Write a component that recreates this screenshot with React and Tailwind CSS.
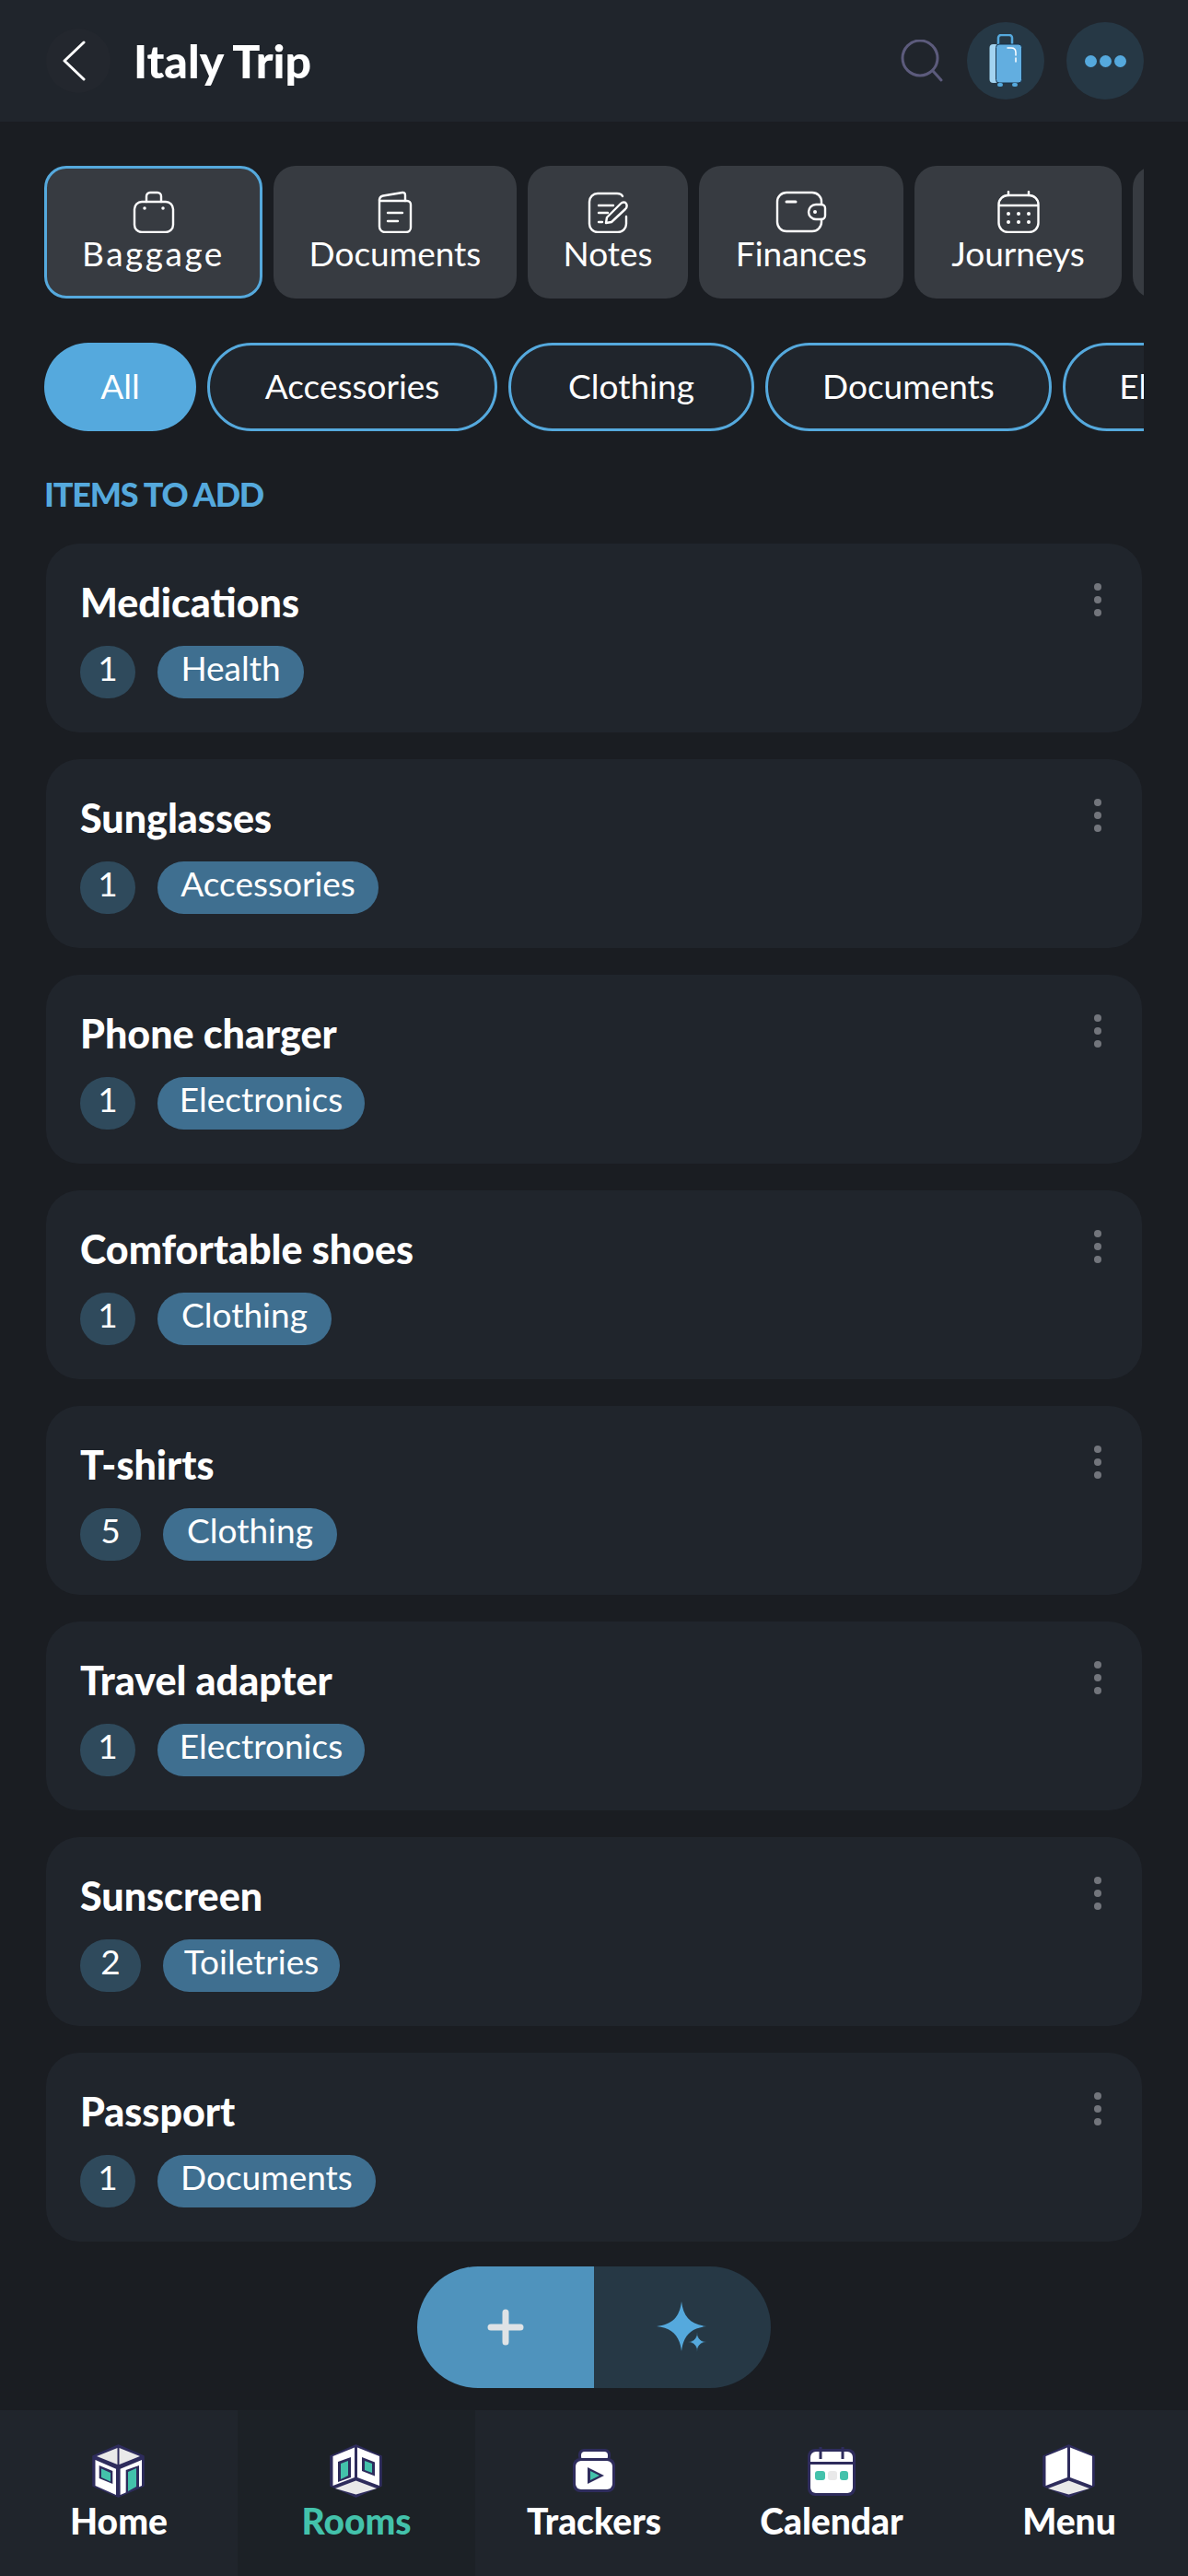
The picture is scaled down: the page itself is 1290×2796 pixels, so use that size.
const font = { fontFamily: 'Lato, sans-serif' }

const tabs = [
  { label: 'Baggage', width: 'w-[237px]', active: true, icon: BagIcon, spacing: 'tracking-[2.5px]' },
  { label: 'Documents', width: 'w-[264px]', icon: DocIcon },
  { label: 'Notes', width: 'w-[174px]', icon: NoteIcon },
  { label: 'Finances', width: 'w-[222px]', icon: WalletIcon },
  { label: 'Journeys', width: 'w-[225px]', icon: CalIcon },
  { label: '', width: 'w-[100px]' },
]

const filters = [
  { label: 'All', width: 'w-[165px]', active: true },
  { label: 'Accessories', width: 'w-[315px]' },
  { label: 'Clothing', width: 'w-[267px]' },
  { label: 'Documents', width: 'w-[311px]' },
  { label: 'Electronics', width: 'w-[300px]' },
]

const items = [
  { name: 'Medications', qty: 1, tag: 'Health', tagWidth: 'w-[159px]' },
  { name: 'Sunglasses', qty: 1, tag: 'Accessories', tagWidth: 'w-[240px]' },
  { name: 'Phone charger', qty: 1, tag: 'Electronics', tagWidth: 'w-[225px]' },
  { name: 'Comfortable shoes', qty: 1, tag: 'Clothing', tagWidth: 'w-[189px]' },
  { name: 'T-shirts', qty: 5, tag: 'Clothing', tagWidth: 'w-[189px]' },
  { name: 'Travel adapter', qty: 1, tag: 'Electronics', tagWidth: 'w-[225px]' },
  { name: 'Sunscreen', qty: 2, tag: 'Toiletries', tagWidth: 'w-[192px]' },
  { name: 'Passport', qty: 1, tag: 'Documents', tagWidth: 'w-[237px]' },
]

function BagIcon() {
  return (
    <svg width="46" height="46" viewBox="0 0 46 46" fill="none" stroke="white" strokeWidth="2.4" strokeLinecap="round" strokeLinejoin="round">
      <rect x="2" y="12" width="42" height="33" rx="8" />
      <path d="M15 12V6a4 4 0 0 1 4-4h8a4 4 0 0 1 4 4v6" />
      <path d="M13 19h.01M33 19h.01" strokeWidth="3.5" />
    </svg>
  )
}

function DocIcon() {
  return (
    <svg width="46" height="46" viewBox="0 0 46 46" fill="none" stroke="white" strokeWidth="2.4" strokeLinecap="round" strokeLinejoin="round">
      <path d="M6 10v29a6 6 0 0 0 6 6h23a5 5 0 0 0 5-5V15a4 4 0 0 0-4-4H6z" />
      <path d="M6 10c0-3 2-4 4-4.500L31 2c2-.3 3 1 3 3v6" />
      <path d="M15 24h16M15 33h11" />
    </svg>
  )
}

function NoteIcon() {
  return (
    <svg width="46" height="46" viewBox="0 0 46 46" fill="none" stroke="white" strokeWidth="2.4" strokeLinecap="round" strokeLinejoin="round">
      <path d="M39 6c-1-2-3-3-6-3H12a9 9 0 0 0-9 9v24a9 9 0 0 0 9 9h22a9 9 0 0 0 9-9v-8" />
      <path d="M13 16h16M13 24h10M13 34h4" />
      <path d="M21 35l1-6L37 14c2-2 5-2 6 0s1 4-1 6L27 34z" />
    </svg>
  )
}

function WalletIcon() {
  return (
    <svg width="56" height="46" viewBox="0 0 56 46" fill="none" stroke="white" strokeWidth="2.4" strokeLinecap="round" strokeLinejoin="round">
      <path d="M50 15v-3a10 10 0 0 0-10-10H12A10 10 0 0 0 2 12v22a10 10 0 0 0 10 10h28a10 10 0 0 0 10-10v-3" />
      <path d="M44 15h6a4 4 0 0 1 4 4v8a4 4 0 0 1-4 4h-6a8 8 0 0 1 0-16z" />
      <path d="M12 12h10" strokeWidth="3" />
      <path d="M43 23h.01" strokeWidth="4" />
    </svg>
  )
}

function CalIcon() {
  return (
    <svg width="46" height="46" viewBox="0 0 46 46" fill="none" stroke="white" strokeWidth="2.4" strokeLinecap="round" strokeLinejoin="round">
      <rect x="1.500" y="5" width="43" height="40" rx="10" />
      <path d="M12 1v4M34 1v4M2 16h42" />
      <path d="M12 25h.01M23 25h.01M34 25h.01M12 34h.01M23 34h.01M34 34h.01" strokeWidth="4" />
    </svg>
  )
}

function SearchIcon() {
  return (
    <svg width="46" height="46" viewBox="0 0 46 46" fill="none" stroke="#5c5b7c" strokeWidth="3" strokeLinecap="round">
      <circle cx="21" cy="20" r="19" />
      <path d="M35 34l9 10" />
    </svg>
  )
}

function LuggageIcon() {
  return (
    <svg width="36" height="58" viewBox="0 0 36 58" fill="none">
      <path d="M10 12V4a3 3 0 0 1 3-3h9a3 3 0 0 1 3 3v8" stroke="#55a9dd" strokeWidth="2.500" />
      <rect x="0.500" y="11" width="10" height="42" rx="4" fill="#a3d3f0" />
      <rect x="7.500" y="11" width="28" height="42" rx="3.500" fill="#62aee0" stroke="#17324a" strokeWidth="1" />
      <path d="M20 15h4c3 0 5 2 5 5v3M29 26v4" stroke="white" strokeWidth="1.500" strokeLinecap="round" />
      <rect x="9" y="53" width="6" height="4" rx="2" fill="#55a9dd" />
      <rect x="25" y="53" width="6" height="4" rx="2" fill="#55a9dd" />
    </svg>
  )
}

function SparkleIcon() {
  return (
    <svg width="56" height="56" viewBox="0 0 56 56" fill="#55a9dd">
      <path d="M27 0C29 17 37 25 54 27 37 29 29 37 27 54 25 37 17 29 0 27 17 25 25 17 27 0z" />
      <path d="M44 33c.6 7 3 10 10 11-7 1-9.400 4-10 11-.6-7-3-10-10-11 7-1 9.400-4 10-11z" stroke="#263845" strokeWidth="0.800" />
    </svg>
  )
}

function HouseIcon() {
  return (
    <svg width="58" height="58" viewBox="0 0 58 58">
      <path d="M28.500 1 56 13v32L28.500 57 1 45V13z" fill="#2e2c5c" stroke="#2e2c5c" strokeWidth="1.500" strokeLinejoin="round" />
      <path d="M27.500 4v18L5 13z" fill="#e9e9e9" />
      <path d="M29.500 4v18L52 13z" fill="#e9e9e9" />
      <path d="M3.500 17 26 26.700V55L3.500 45z" fill="white" />
      <path d="M30.600 26.700 54 17v28L30.600 55z" fill="white" />
      <path d="M7.700 23 22.300 29V43L7.700 37z" fill="#2e2c5c" />
      <path d="M10 26.500 20 31v9.500L10 36z" fill="#43c2ab" />
      <path d="M36.700 53V28L51 23V47z" fill="#2e2c5c" />
      <path d="M39 51V30L48 26V46z" fill="#43c2ab" />
    </svg>
  )
}

function RoomsIcon({ plain }) {
  return (
    <svg width="58" height="58" viewBox="0 0 58 58">
      <path d="M28.500 1 56 13v32L28.500 57 1 45V13z" fill="#2e2c5c" stroke="#2e2c5c" strokeWidth="1.500" strokeLinejoin="round" />
      <path d="M3.500 13 27 3.500V36L3.500 45z" fill="white" />
      <path d="M30 3.500 54 13v32L30 36z" fill="white" />
      <path d="M28.500 39.500 51 48 28.500 54.500 6 48z" fill="#e9e9e9" />
      {plain ? null : (
        <>
          <path d="M9 41V19l14-5v22z" fill="#2e2c5c" />
          <path d="M12 38V21l8-3v16z" fill="#43c2ab" />
          <path d="M35 14l14 5.500v15L35 29z" fill="#2e2c5c" />
          <path d="M38 18l8 3v10l-8-3z" fill="#43c2ab" />
        </>
      )}
    </svg>
  )
}

function TrackerIcon() {
  return (
    <svg width="58" height="58" viewBox="-6 -5 58 58">
      <rect x="6" y="0" width="35" height="14" rx="6" fill="#2e2c5c" />
      <rect x="9" y="3" width="29" height="9" rx="4" fill="white" />
      <rect x="0" y="10" width="46" height="37" rx="8" fill="#2e2c5c" />
      <rect x="3" y="13" width="40" height="31" rx="6" fill="white" />
      <path d="M16 20 34 29 16 38z" fill="#2e2c5c" />
      <path d="M19 24 29 29 19 34z" fill="#43c2ab" />
    </svg>
  )
}

function CalendarNavIcon() {
  return (
    <svg width="58" height="58" viewBox="0 0 58 58">
      <rect x="3" y="5" width="52" height="51" rx="8" fill="#2e2c5c" />
      <rect x="6" y="8" width="46" height="45" rx="6" fill="white" />
      <path d="M6 19h46v3H6z" fill="#2e2c5c" />
      <path d="M17 3v13M41 3v13" stroke="#2e2c5c" strokeWidth="3" />
      <rect x="11" y="29" width="11" height="10" rx="3" fill="#43c2ab" />
      <rect x="25" y="29" width="10" height="10" rx="3" fill="#e9e9e9" />
      <rect x="38" y="29" width="9" height="10" rx="3" fill="#43c2ab" />
    </svg>
  )
}

const navItems = [
  { label: 'Home', icon: <HouseIcon /> },
  { label: 'Rooms', icon: <RoomsIcon />, active: true },
  { label: 'Trackers', icon: <TrackerIcon /> },
  { label: 'Calendar', icon: <CalendarNavIcon /> },
  { label: 'Menu', icon: <RoomsIcon plain /> },
]

function Header() {
  return (
    <header className="flex h-[132px] items-center justify-between bg-[#20252c] pl-[50px] pr-[48px]">
      <div className="flex items-center gap-[25px]">
        <div className="flex h-[70px] w-[70px] items-center rounded-full bg-[#23272e] pl-[17px]">
          <svg width="26" height="44" viewBox="0 0 26 44" fill="none" stroke="white" strokeWidth="3" strokeLinecap="round" strokeLinejoin="round">
            <path d="M24 2 3 22l21 20" />
          </svg>
        </div>
        <h1 className="text-[50px] font-black leading-none text-white">Italy Trip</h1>
      </div>
      <div className="flex items-center">
        <div className="mr-[26px]">
          <SearchIcon />
        </div>
        <div className="mr-[24px] flex h-[84px] w-[84px] items-center justify-center rounded-full bg-[#263845]">
          <LuggageIcon />
        </div>
        <div className="flex h-[84px] w-[84px] items-center justify-center gap-[3px] rounded-full bg-[#263845]">
          <span className="h-[13px] w-[13px] rounded-full bg-[#55a9dd]" />
          <span className="h-[13px] w-[13px] rounded-full bg-[#55a9dd]" />
          <span className="h-[13px] w-[13px] rounded-full bg-[#55a9dd]" />
        </div>
      </div>
    </header>
  )
}

function Tabs() {
  return (
    <div className="mx-[48px] mt-[48px] flex gap-[12px] overflow-hidden">
      {tabs.map(({ label, width, active, icon: Icon, spacing }, index) => (
        <div
          key={index}
          className={`flex h-[144px] shrink-0 flex-col items-center rounded-[24px] bg-[#373b41] ${width} ${active ? 'border-[3px] border-[#55a9dd] pt-[24px]' : 'pt-[27px]'}`}
        >
          {Icon ? <Icon /> : null}
          <span className={`-mt-[1px] text-[37px] leading-[46px] text-white ${spacing || ''}`}>{label}</span>
        </div>
      ))}
    </div>
  )
}

function Filters() {
  return (
    <div className="mx-[48px] mt-[48px] flex gap-[12px] overflow-hidden">
      {filters.map(({ label, width, active }) => (
        <div
          key={label}
          className={`flex h-[96px] shrink-0 items-center justify-center rounded-full pb-[2px] text-[37px] text-white ${width} ${active ? 'bg-[#55a9dd]' : 'border-[3px] border-[#55a9dd] bg-[#20252c]'}`}
        >
          {label}
        </div>
      ))}
    </div>
  )
}

function ItemCard({ name, qty, tag, tagWidth }) {
  return (
    <div className="flex h-[205px] justify-between rounded-[36px] bg-[#20252c] pl-[37px] pr-[44px] pt-[39px]">
      <div>
        <div className="text-[43px] font-black leading-[50px] text-white">{name}</div>
        <div className="mt-[22px] flex gap-[24px]">
          <span className={`flex h-[57px] items-center justify-center rounded-full bg-[#2f4a5c] pb-[9px] text-[37px] text-white ${qty === 1 ? 'w-[60px]' : 'w-[66px]'}`}>
            {qty}
          </span>
          <span className={`flex h-[57px] items-center justify-center rounded-full bg-[#3f6f90] pb-[9px] text-[37px] text-white ${tagWidth}`}>
            {tag}
          </span>
        </div>
      </div>
      <div className="flex flex-col gap-[6px] pt-[4px]">
        <span className="h-[8px] w-[8px] rounded-full bg-[#72757c]" />
        <span className="h-[8px] w-[8px] rounded-full bg-[#72757c]" />
        <span className="h-[8px] w-[8px] rounded-full bg-[#72757c]" />
      </div>
    </div>
  )
}

function ActionButton() {
  return (
    <div className="mt-[27px] flex justify-center">
      <div className="flex h-[132px] w-[192px] items-center justify-center rounded-l-full bg-[#4f93bd]">
        <svg width="40" height="40" viewBox="0 0 40 40" stroke="#dfe3e6" strokeWidth="7" strokeLinecap="round">
          <path d="M20 4v32M4 20h32" />
        </svg>
      </div>
      <div className="flex h-[132px] w-[192px] items-center justify-center rounded-r-full bg-[#263845]">
        <SparkleIcon />
      </div>
    </div>
  )
}

function BottomNav() {
  return (
    <nav className="mt-[24px] grid h-[180px] grid-cols-5 bg-[#20252c]">
      {navItems.map(({ label, icon, active }) => (
        <div key={label} className={`flex flex-col items-center pt-[37px] ${active ? 'bg-[#1c2126]' : ''}`}>
          {icon}
          <span className={`text-[39px] font-black leading-[50px] ${active ? 'text-[#43c2ab]' : 'text-white'}`}>{label}</span>
        </div>
      ))}
    </nav>
  )
}

export default function App() {
  return (
    <div className="h-[2796px] w-[1290px] overflow-hidden bg-[#1a1d22]" style={font}>
      <Header />
      <Tabs />
      <Filters />
      <div className="ml-[48px] mt-[50px] text-[36px] font-black uppercase leading-[36px] tracking-[-1.2px] text-[#55a9dd]">Items to add</div>
      <div className="mx-[50px] mt-[36px] flex flex-col gap-[29px]">
        {items.map((item) => (
          <ItemCard key={item.name} {...item} />
        ))}
      </div>
      <ActionButton />
      <BottomNav />
    </div>
  )
}
